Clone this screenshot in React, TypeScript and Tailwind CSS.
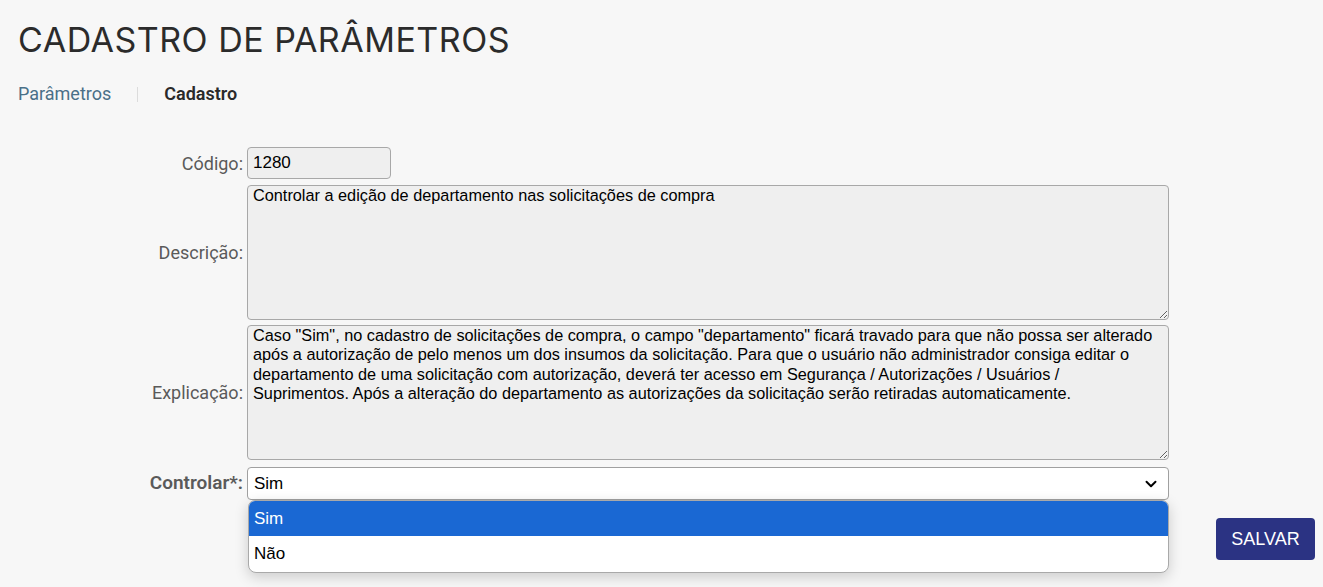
import { ChevronDown } from 'lucide-react';

const labelFont = { fontFamily: 'Roboto, "Noto Sans", sans-serif' };
const fieldFont = { fontFamily: '"Liberation Sans", Arial, sans-serif' };

function Label({ children, className = '' }: { children: React.ReactNode; className?: string }) {
  return (
    <div
      className={`flex items-center justify-end pr-1 text-[18px] text-[#5a5a5a] ${className}`}
      style={labelFont}
    >
      {children}
    </div>
  );
}

export default function App() {
  return (
    <main className="min-h-screen bg-[#f7f7f7] text-[#333]">
      <header className="px-[18px] pt-[20px]">
        <h1 className="text-[34px] leading-[40px] tracking-[0.5px] text-[#2b2b2b]" style={{ fontFamily: 'Inter, Roboto, sans-serif' }}>
          CADASTRO DE PARÂMETROS
        </h1>
        <nav className="mt-[24px] flex h-[20px] items-center text-[18px] leading-[20px]" style={labelFont}>
          <span className="text-[#4a7088]">Parâmetros</span>
          <span className="ml-[26px] mr-[26px] h-[15px] w-px bg-[#dcdcdc]" />
          <span className="font-semibold text-[#2a2a2a]">Cadastro</span>
        </nav>
      </header>

      <form className="mt-[43px] grid grid-cols-[247px_922px]">
        <Label>Código:</Label>
        <div>
          <input
            readOnly
            value="1280"
            className="h-[32px] w-[144px] rounded-[4px] border border-[#a8a8a8] bg-[#efefef] px-[5px] text-[17px] text-black outline-none"
            style={fieldFont}
          />
        </div>

        <Label className="mt-[6px]">Descrição:</Label>
        <textarea
          readOnly
          className="mt-[6px] h-[135px] w-[922px] rounded-[4px] border border-[#a8a8a8] bg-[#efefef] pb-[2px] pl-[5px] pr-[10px] pt-0 text-[16.3px] leading-[19.3px] text-black outline-none"
          style={fieldFont}
          defaultValue="Controlar a edição de departamento nas solicitações de compra"
        />

        <Label className="mt-[5px]">Explicação:</Label>
        <textarea
          readOnly
          className="mt-[5px] h-[135px] w-[922px] rounded-[4px] border border-[#a8a8a8] bg-[#efefef] pb-[2px] pl-[5px] pr-[10px] pt-0 text-[16.3px] leading-[19.3px] text-black outline-none"
          style={fieldFont}
          defaultValue={'Caso "Sim", no cadastro de solicitações de compra, o campo "departamento" ficará travado para que não possa ser alterado após a autorização de pelo menos um dos insumos da solicitação. Para que o usuário não administrador consiga editar o departamento de uma solicitação com autorização, deverá ter acesso em Segurança / Autorizações / Usuários / Suprimentos. Após a alteração do departamento as autorizações da solicitação serão retiradas automaticamente.'}
        />

        <Label className="mt-[7px] text-[19px] font-semibold text-[#2e2e2e]">Controlar*:</Label>
        <div className="relative mt-[7px]">
          <div
            className="flex h-[33px] items-center justify-between rounded-[4px] border border-[#a0a0a0] bg-white pl-[6px] pr-[8px] text-[17px] text-black"
            style={fieldFont}
          >
            <span>Sim</span>
            <ChevronDown className="h-[18px] w-[18px]" strokeWidth={2.6} />
          </div>
          <div
            className="absolute left-px top-[33px] z-10 w-[921px] overflow-hidden rounded-b-[8px] rounded-t-[7px] border border-[#a9a9a9] bg-white text-[17px] text-black shadow-[0_4px_14px_rgba(0,0,0,0.18)]"
            style={fieldFont}
          >
            <div className="flex h-[35px] items-center bg-[#1a68d3] px-[5px] text-white">Sim</div>
            <div className="flex h-[36px] items-center px-[5px]">Não</div>
          </div>
        </div>
      </form>

      <div className="mt-[18px] flex justify-end pr-[8px]">
        <button
          type="button"
          className="h-[42px] w-[99px] rounded-[4px] bg-[#2b3383] text-[18px] text-white"
          style={fieldFont}
        >
          SALVAR
        </button>
      </div>
    </main>
  );
}
